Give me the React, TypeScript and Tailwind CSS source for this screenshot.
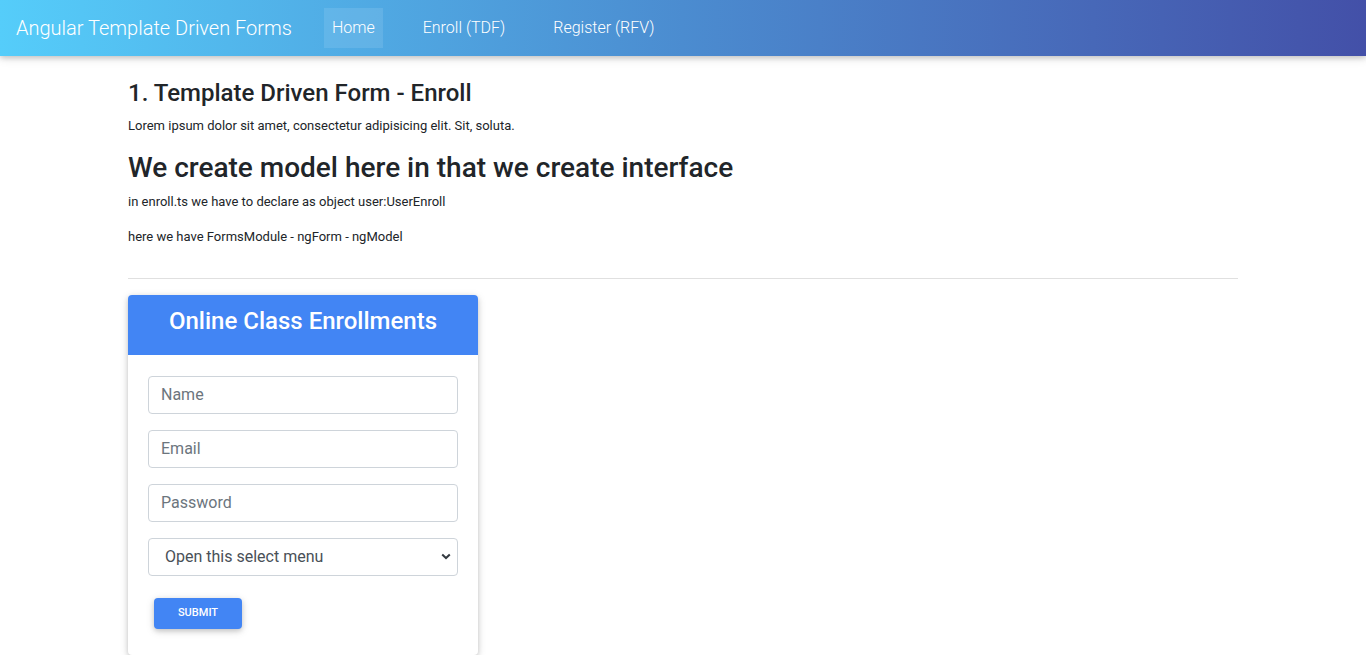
import { useState } from 'react';

const navLinks = ['Home', 'Enroll (TDF)', 'Register (RFV)'];

const App = () => {
  const [active] = useState('Home');
  const [topic, setTopic] = useState('');

  return (
    <div className="min-h-screen bg-white text-[#212529] font-['Roboto','Liberation_Sans',sans-serif]">
      {/* Navbar */}
      <nav className="h-14 flex items-center px-4 gap-8 bg-gradient-to-r from-[#55cdfa] via-[#4b8cd0] to-[#4350a8] shadow-[0_2px_5px_0_rgba(0,0,0,0.16),0_2px_10px_0_rgba(0,0,0,0.12)]">
        <span className="text-[20px] font-light text-white leading-none">Angular Template Driven Forms</span>
        <ul className="flex items-center gap-8">
          {navLinks.map((link) => (
            <li key={link}>
              <a
                href="#"
                className={`block h-10 leading-10 px-2 text-[16px] font-light text-white ${
                  link === active ? 'bg-white/10' : ''
                }`}
              >
                {link}
              </a>
            </li>
          ))}
        </ul>
      </nav>

      {/* Content */}
      <div className="max-w-[1140px] mx-auto px-[15px] pt-[23px]">
        <h3 className="text-[24px] font-medium leading-[1.2] mb-2">1. Template Driven Form - Enroll</h3>
        <p className="text-[13px] leading-[1.5] mb-4">
          Lorem ipsum dolor sit amet, consectetur adipisicing elit. Sit, soluta.
        </p>
        <h2 className="text-[28px] font-medium leading-[1.2] mb-[7px]">We create model here in that we create interface</h2>
        <p className="text-[13px] leading-[1.5] mb-4">in enroll.ts we have to declare as object user:UserEnroll</p>
        <p className="text-[13px] leading-[1.5] mb-4">here we have FormsModule - ngForm - ngModel</p>

        <hr className="border-0 border-t border-[#e0e0e0] mt-[31px] mb-4" />

        {/* Enrollment card */}
        <div className="w-[350px] rounded bg-white shadow-[0_2px_5px_0_rgba(0,0,0,0.16),0_2px_10px_0_rgba(0,0,0,0.12)]">
          <div className="h-[60px] pb-2 rounded-t bg-[#4285f4] flex items-center justify-center">
            <h4 className="text-[24px] font-medium text-white leading-none">Online Class Enrollments</h4>
          </div>
          <form className="px-5 pt-[21px] pb-5" onSubmit={(e) => e.preventDefault()}>
            <input
              type="text"
              placeholder="Name"
              className="block w-full h-[38px] mb-4 px-3 text-[16px] border border-[#ced4da] rounded placeholder:text-[#6c757d] text-[#495057] outline-none"
            />
            <input
              type="email"
              placeholder="Email"
              className="block w-full h-[38px] mb-4 px-3 text-[16px] border border-[#ced4da] rounded placeholder:text-[#6c757d] text-[#495057] outline-none"
            />
            <input
              type="password"
              placeholder="Password"
              className="block w-full h-[38px] mb-4 px-3 text-[16px] border border-[#ced4da] rounded placeholder:text-[#6c757d] text-[#495057] outline-none"
            />
            <div className="relative mb-4">
              <select
                value={topic}
                onChange={(e) => setTopic(e.target.value)}
                className="block w-full h-[38px] pl-4 pr-8 text-[16px] text-[#495057] bg-white border border-[#ced4da] rounded appearance-none outline-none"
              >
                <option value="">Open this select menu</option>
                <option value="angular">Angular</option>
                <option value="react">React</option>
                <option value="vue">Vue</option>
              </select>
              <svg
                className="absolute right-[7px] top-[15px] pointer-events-none"
                width="10"
                height="7"
                viewBox="0 0 10 7"
              >
                <path d="M1.2 1.4 L5 5 L8.8 1.4" fill="none" stroke="#343a40" strokeWidth="2" />
              </svg>
            </div>
            <button
              type="submit"
              className="m-[6px] w-[88px] h-[31px] rounded bg-[#4285f4] text-white text-[11px] font-medium uppercase shadow-[0_2px_5px_0_rgba(0,0,0,0.16),0_2px_10px_0_rgba(0,0,0,0.12)]"
            >
              Submit
            </button>
          </form>
        </div>
      </div>
    </div>
  );
};

export default App;
